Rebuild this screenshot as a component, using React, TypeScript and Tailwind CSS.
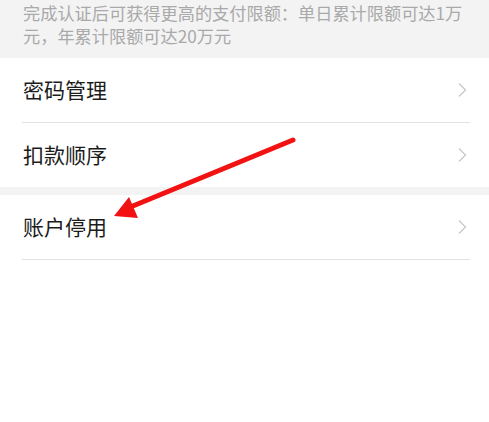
import React from "react";

function Chevron() {
  return (
    <svg width="12" height="16" viewBox="0 0 12 16" className="shrink-0">
      <path d="M3 1.5 L9.5 8 L3 14.5" fill="none" stroke="#c6c6c6" strokeWidth="1.2" />
    </svg>
  );
}

function Row({ label, divider }: { label: string; divider: boolean }) {
  return (
    <div className="px-[23px] flex flex-col">
      <div className="h-[64px] flex items-center justify-between">
        <span className="text-[21px] leading-none text-[#1c1c1c] -mt-[2px]">{label}</span>
        <div className="mr-[-2px]">
          <Chevron />
        </div>
      </div>
      {divider && <div className="h-px bg-[#e3e3e3] -ml-px mr-[-4px]" />}
    </div>
  );
}

export default function App() {
  return (
    <div
      className="relative w-[489px] h-[422px] bg-white overflow-hidden"
      style={{ fontFamily: '"Noto Sans CJK SC", "Noto Sans", sans-serif' }}
    >
      <div className="bg-[#f3f3f3] h-[58px] px-[23px] pt-px">
        <p className="text-[17.2px] leading-[23px] text-[#a9a9a9]">
          完成认证后可获得更高的支付限额：单日累计限额可达1万元，年累计限额可达20万元
        </p>
      </div>
      <Row label="密码管理" divider />
      <Row label="扣款顺序" divider={false} />
      <div className="h-[8px] bg-[#f3f3f3]" />
      <Row label="账户停用" divider />
      <svg className="absolute left-0 top-0 pointer-events-none" width="489" height="422">
        <line x1="293" y1="140" x2="128" y2="208" stroke="#f21212" strokeWidth="5" strokeLinecap="round" />
        <polygon points="114,216 129,197 138,218" fill="#f21212" />
      </svg>
    </div>
  );
}
